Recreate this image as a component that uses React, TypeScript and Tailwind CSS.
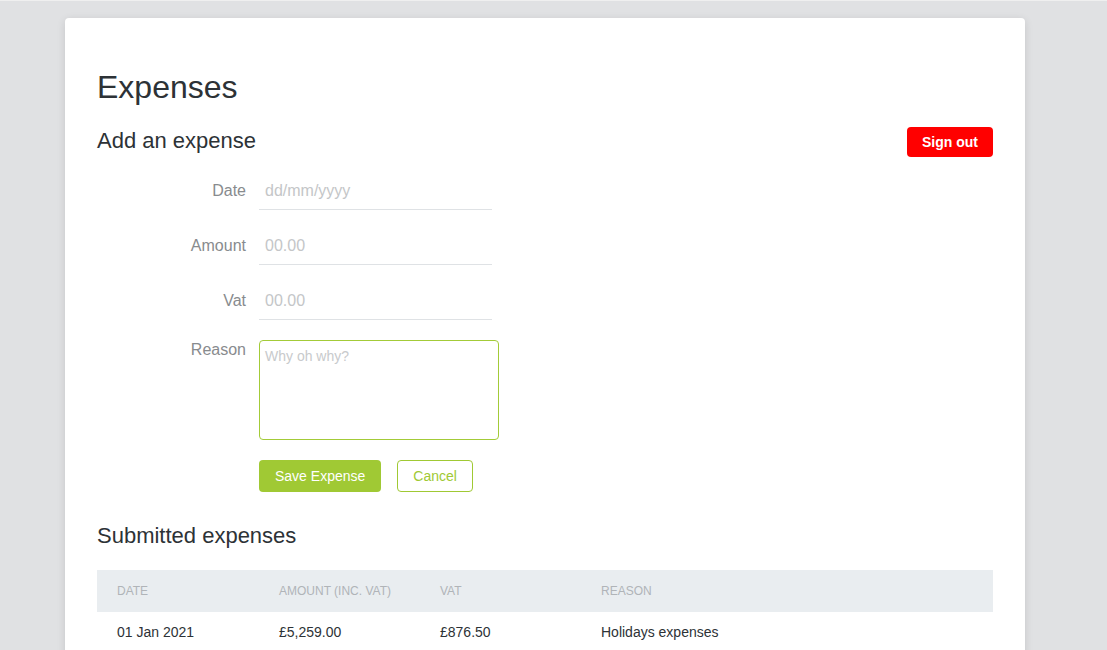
import { useState } from "react";

const expenses = [
  { date: "01 Jan 2021", amount: "£5,259.00", vat: "£876.50", reason: "Holidays expenses" },
];

const App = () => {
  const [form, setForm] = useState({ date: "", amount: "", vat: "", reason: "" });

  const update = (key: keyof typeof form) => (e: React.ChangeEvent<HTMLInputElement | HTMLTextAreaElement>) =>
    setForm({ ...form, [key]: e.target.value });

  return (
    <div className="min-h-screen bg-[#e0e1e3] border-t border-[#efefef] pt-[17px] font-['Liberation_Sans',Arial,sans-serif]">
      <div className="ml-[65px] w-[960px] bg-white rounded-[4px] shadow-[0_2px_8px_rgba(0,0,0,0.12)] px-8 pt-[49px] pb-10">
        <h1 className="text-[32px] leading-[40px] text-[#2d3236]">Expenses</h1>

        {/* Add expense header */}
        <div className="mt-[19px] flex items-center justify-between">
          <h2 className="pb-[2px] text-[22px] leading-[30px] text-[#2d3236]">Add an expense</h2>
          <button className="h-[30px] px-[15px] rounded-[4px] bg-[#ff0000] text-white text-sm font-bold">
            Sign out
          </button>
        </div>

        {/* Form */}
        <div className="mt-[15px] flex flex-col gap-[18px]">
          {[
            { key: "date" as const, label: "Date", placeholder: "dd/mm/yyyy" },
            { key: "amount" as const, label: "Amount", placeholder: "00.00" },
            { key: "vat" as const, label: "Vat", placeholder: "00.00" },
          ].map((field) => (
            <div key={field.key} className="flex gap-[13px]">
              <label className="w-[149px] text-right pt-[6px] text-base leading-6 text-[#888b8e]">
                {field.label}
              </label>
              <input
                value={form[field.key]}
                onChange={update(field.key)}
                placeholder={field.placeholder}
                className="w-[233px] py-[6px] px-[6px] text-base leading-6 text-[#333] placeholder-[#c4c6c8] border-b border-[#dfe2e5] outline-none"
              />
            </div>
          ))}
        </div>

        <div className="mt-[20px] flex gap-[13px]">
          <label className="w-[149px] text-right -mt-[2px] text-base leading-6 text-[#888b8e]">Reason</label>
          <textarea
            value={form.reason}
            onChange={update("reason")}
            placeholder="Why oh why?"
            className="w-[240px] h-[100px] resize-none rounded-[4px] border border-[#a3cb38] px-[5px] pt-[5px] text-sm leading-5 text-[#333] placeholder-[#c8cacc] outline-none"
          />
        </div>

        <div className="mt-[20px] ml-[162px] flex gap-4">
          <button className="h-8 px-4 rounded-[4px] bg-[#a0c934] text-white text-sm">Save Expense</button>
          <button className="h-8 px-[15px] rounded-[4px] border border-[#a0c934] text-[#a0c934] text-sm">
            Cancel
          </button>
        </div>

        {/* Submitted expenses */}
        <h2 className="mt-[29px] text-[22px] leading-[30px] text-[#2d3236]">Submitted expenses</h2>

        <div className="mt-[19px]">
          <div className="grid grid-cols-[162px_161px_161px_1fr] h-[42px] items-center bg-[#e9edf0] text-xs uppercase text-[#b0b4b8]">
            <div className="px-5">Date</div>
            <div className="px-5">Amount (inc. vat)</div>
            <div className="px-5">Vat</div>
            <div className="px-5">Reason</div>
          </div>
          {expenses.map((row) => (
            <div key={row.date} className="grid grid-cols-[162px_161px_161px_1fr] h-[40px] items-center text-sm text-[#2d3236]">
              <div className="px-5">{row.date}</div>
              <div className="px-5">{row.amount}</div>
              <div className="px-5">{row.vat}</div>
              <div className="px-5">{row.reason}</div>
            </div>
          ))}
        </div>
      </div>
    </div>
  );
};

export default App;
